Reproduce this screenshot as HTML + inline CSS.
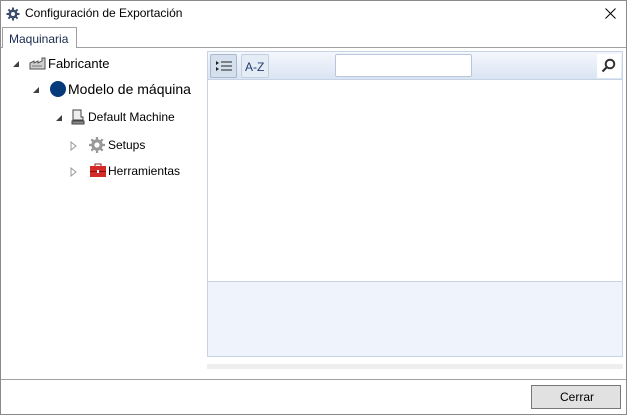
<!DOCTYPE html>
<html><head><style>
*{margin:0;padding:0;box-sizing:border-box}
body{width:627px;height:415px;position:relative;background:#fff;font-family:"Liberation Sans",sans-serif;font-size:12px;color:#000;overflow:hidden}
.a{position:absolute}
.t{position:absolute;white-space:nowrap}
</style></head><body>
<div class="a" style="left:0;top:0;width:627px;height:415px;border:1px solid #8a8a8a"></div>
<svg class="a" style="left:6px;top:7px" width="14" height="14" viewBox="0 0 14 14"><g fill="#3b4d6b"><circle cx="7" cy="7" r="4.5"/><rect x="6" y="0.5" width="2" height="13"/><rect x="0.5" y="6" width="13" height="2"/><rect x="6" y="0.5" width="2" height="13" transform="rotate(45 7 7)"/><rect x="6" y="0.5" width="2" height="13" transform="rotate(-45 7 7)"/></g><circle cx="7" cy="7" r="2" fill="#fff"/></svg>
<div class="t" style="left:25px;top:6px;font-size:12px">Configuración de Exportación</div>
<svg class="a" style="left:605px;top:8px" width="11" height="11"><path d="M0.5 0.5L10.5 10.5M10.5 0.5L0.5 10.5" stroke="#000" stroke-width="1"/></svg>
<div class="a" style="left:1px;top:47px;width:625px;height:333px;border-top:1px solid #a0a0a0;border-bottom:1px solid #a0a0a0"></div>
<div class="a" style="left:2px;top:27px;width:75px;height:21px;border:1px solid #a0a0a0;border-bottom:none;background:#fff"></div>
<div class="t" style="left:9px;top:32px;color:#1a2a50">Maquinaria</div>
<!-- tree -->
<svg class="a" style="left:12px;top:60px" width="8" height="8"><path d="M7 1V7H1Z" fill="#404040"/></svg>
<svg class="a" style="left:29px;top:56px" width="18" height="14"><path d="M1 13V7L5 5V7L9 5V7L13 5V2H16V13Z" fill="#d0d0d0" stroke="#505050"/><path d="M3 10h10" stroke="#777"/></svg>
<div class="t" style="left:48px;top:56px;font-size:13px">Fabricante</div>
<svg class="a" style="left:32px;top:86px" width="8" height="8"><path d="M7 1V7H1Z" fill="#404040"/></svg>
<div class="a" style="left:50px;top:81px;width:16px;height:16px;border-radius:50%;background:#063a7a"></div>
<div class="t" style="left:68px;top:81px;font-size:14px">Modelo de máquina</div>
<svg class="a" style="left:55px;top:114px" width="8" height="8"><path d="M7 1V7H1Z" fill="#404040"/></svg>
<svg class="a" style="left:70px;top:109px" width="16" height="16"><path d="M3 1H11V8H13V11H3Z" fill="#eee" stroke="#444"/><path d="M2 12H14V15H2Z" fill="#888" stroke="#444"/></svg>
<div class="t" style="left:88px;top:110px">Default Machine</div>
<svg class="a" style="left:70px;top:141px" width="8" height="10"><path d="M1 1L6 5L1 9Z" fill="none" stroke="#999"/></svg>
<svg class="a" style="left:89px;top:137px" width="16" height="16" viewBox="0 0 14 14"><g fill="#999"><circle cx="7" cy="7" r="5"/><rect x="6" y="0" width="2" height="14"/><rect x="0" y="6" width="14" height="2"/><rect x="6" y="0" width="2" height="14" transform="rotate(45 7 7)"/><rect x="6" y="0" width="2" height="14" transform="rotate(-45 7 7)"/></g><circle cx="7" cy="7" r="2.3" fill="#fff"/></svg>
<div class="t" style="left:108px;top:138px">Setups</div>
<svg class="a" style="left:70px;top:167px" width="8" height="10"><path d="M1 1L6 5L1 9Z" fill="none" stroke="#999"/></svg>
<svg class="a" style="left:89px;top:163px" width="18" height="15"><path d="M6 3V1H12V3" fill="none" stroke="#822"/><rect x="1" y="3" width="16" height="11" fill="#d42a2a"/><rect x="1" y="8" width="16" height="1" fill="#8a1010"/><rect x="8" y="7" width="2" height="3" fill="#fff"/></svg>
<div class="t" style="left:108px;top:164px">Herramientas</div>
<!-- right panel -->
<div class="a" style="left:207px;top:51px;width:416px;height:306px;border:1px solid #c8d4e6;background:#fff"></div>
<div class="a" style="left:208px;top:52px;width:414px;height:28px;background:linear-gradient(#f4f7fc,#dae5f3);border-bottom:1px solid #c8d4e6"></div>
<div class="a" style="left:210px;top:54px;width:27px;height:24px;border:1px solid #a9b8cf;border-radius:2px;background:#d5e0ee"></div>
<svg class="a" style="left:215px;top:60px" width="18" height="12"><path d="M1 1L4 3L1 5Z M1 7L4 9L1 11Z" fill="#222"/><path d="M6 2H17M6 6H17M6 10H17" stroke="#222"/></svg>
<div class="a" style="left:241px;top:54px;width:28px;height:24px;border:1px solid #c4d0e2;border-radius:2px;background:#e4ecf6"></div>
<div class="t" style="left:245px;top:60px;color:#223a70">A-Z</div>
<div class="a" style="left:335px;top:54px;width:137px;height:23px;border:1px solid #b8c6da;border-radius:2px;background:#fff"></div>
<div class="a" style="left:597px;top:54px;width:24px;height:24px;background:#fff"></div>
<svg class="a" style="left:601px;top:58px" width="15" height="15"><circle cx="9" cy="6" r="4.3" fill="none" stroke="#333" stroke-width="2"/><path d="M6 9L1.5 13.5" stroke="#333" stroke-width="2.2"/></svg>
<div class="a" style="left:208px;top:281px;width:414px;height:75px;background:#eff3fb;border-top:1px solid #c8d4e6"></div>
<div class="a" style="left:207px;top:364px;width:416px;height:5px;background:#eeeeee"></div>
<div class="a" style="left:531px;top:385px;width:90px;height:24px;border:1px solid #777;background:#e1e1e1"></div>
<div class="t" style="left:560px;top:390px">Cerrar</div>
</body></html>
